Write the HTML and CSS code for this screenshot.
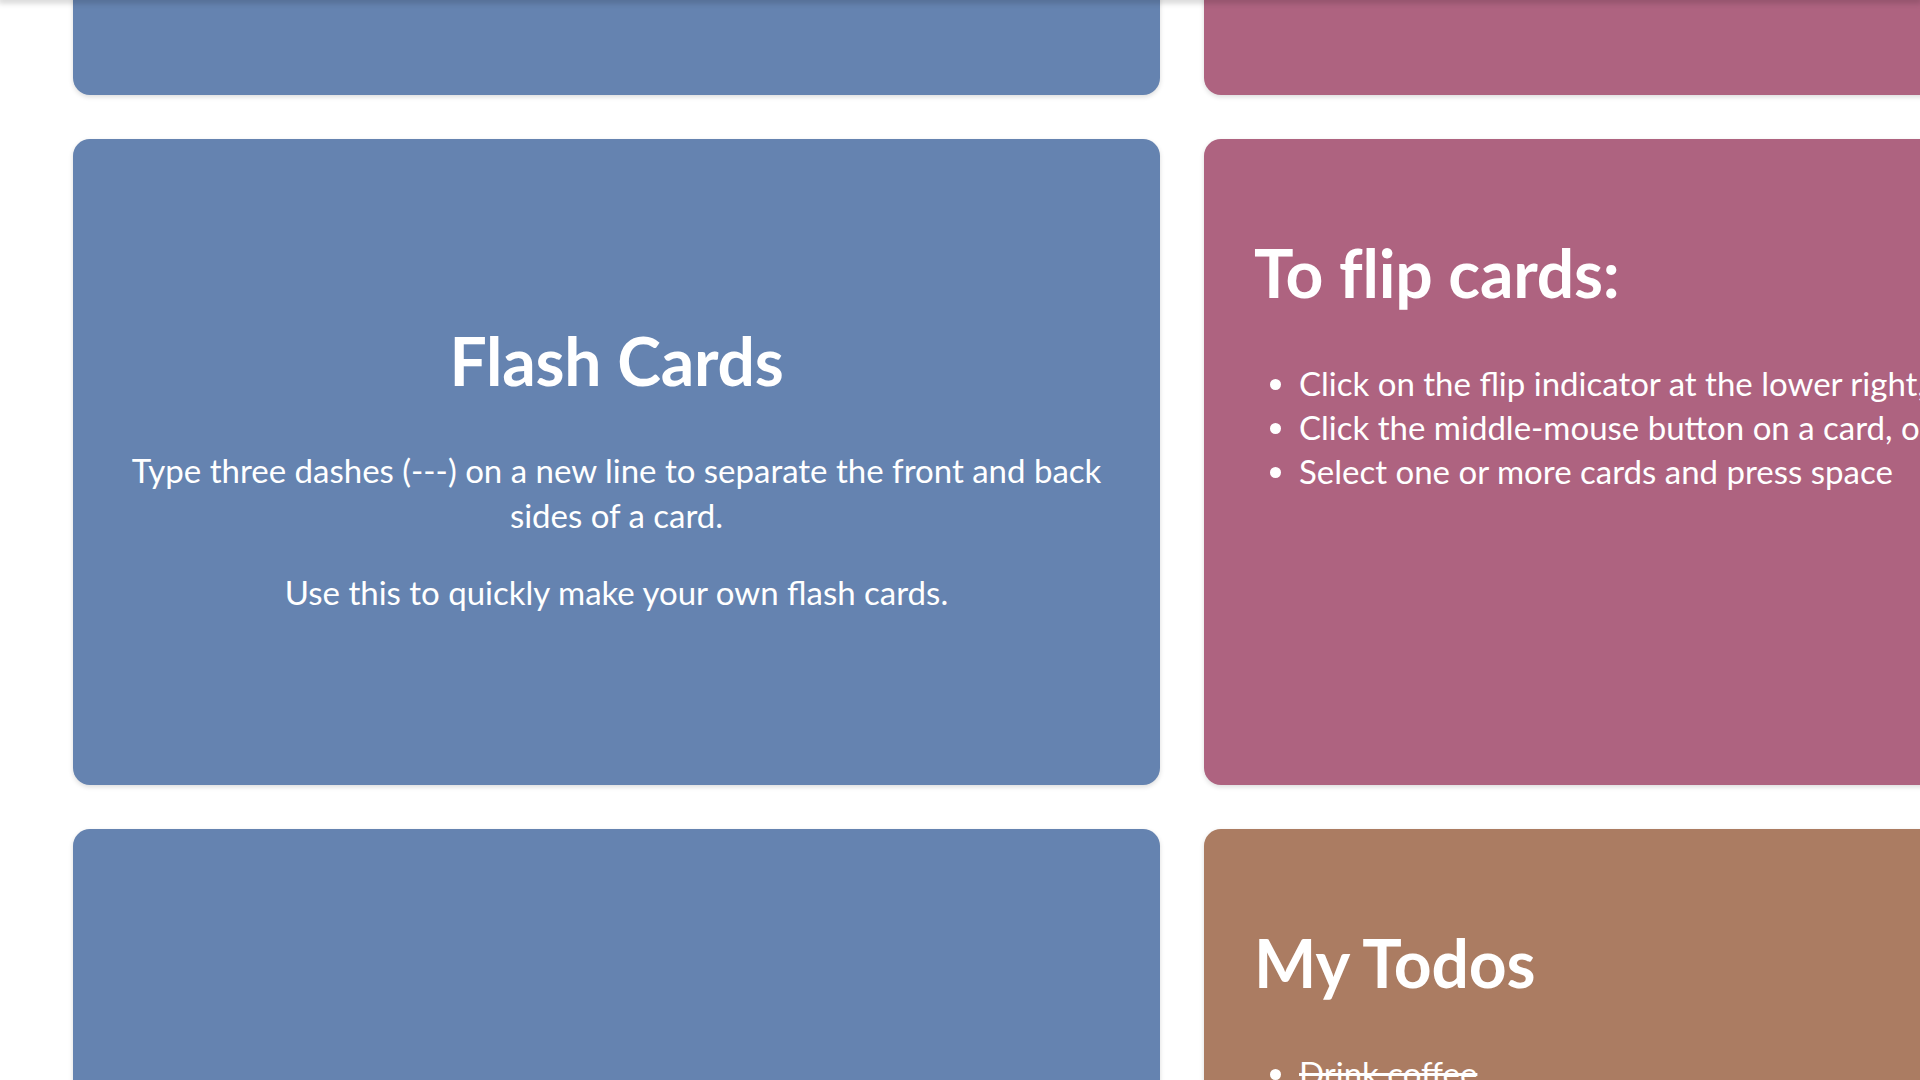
FILE: index.html
```html
<!DOCTYPE html>
<html lang="en">
<head>
<meta charset="utf-8">
<title>Canvas cards</title>
<link rel="stylesheet" href="styles.css">
</head>
<body>
<div class="topshade"></div>
<main class="canvas">
  <section class="card blue"></section>
  <section class="card pink"></section>

  <section class="card blue flash">
    <h1>Flash Cards</h1>
    <p>Type three dashes (---) on a new line to separate the front and back sides of a card.</p>
    <p>Use this to quickly make your own flash cards.</p>
  </section>
  <section class="card pink note">
    <h1>To flip cards:</h1>
    <ul>
      <li>Click on the flip indicator at the lower right, or</li>
      <li>Click the middle-mouse button on a card, or</li>
      <li>Select one or more cards and press space</li>
    </ul>
  </section>

  <section class="card blue"></section>
  <section class="card brown note">
    <h1>My Todos</h1>
    <ul>
      <li class="done">Drink coffee</li>
      <li>Write notes</li>
    </ul>
  </section>
</main>
</body>
</html>
```
FILE: styles.css
```css
html, body {
  margin: 0;
  padding: 0;
  background: #ffffff;
  overflow: hidden;
  width: 1920px;
  height: 1080px;
}

body {
  font-family: Lato, "Noto Sans", sans-serif;
  color: #ffffff;
}

.topshade {
  position: fixed;
  left: 0;
  top: 0;
  width: 100%;
  height: 0;
  box-shadow: 0 0 6px 2px rgba(0, 0, 0, 0.28);
  z-index: 5;
}

.canvas {
  display: grid;
  grid-template-columns: 1087px 1087px;
  grid-auto-rows: 646px;
  column-gap: 44px;
  row-gap: 44px;
  padding-left: 73px;
  margin-top: -551px;
}

.card {
  border-radius: 17px;
  box-shadow: 0 2px 5px rgba(0, 0, 0, 0.14);
  box-sizing: border-box;
  padding: 48px 50px;
  overflow: hidden;
}

.blue { background: #6583b0; }
.pink { background: #ae6380; }
.brown { background: #ab7c62; }

.card h1 {
  font-size: 66px;
  font-weight: 700;
  line-height: 79px;
  margin: 0;
  letter-spacing: -0.2px;
}

.flash {
  display: flex;
  flex-direction: column;
  justify-content: center;
  align-items: center;
  text-align: center;
  padding-top: 60px;
}

.flash h1 {
  margin-bottom: 48px;
}

.flash p {
  font-size: 33px;
  line-height: 45px;
  margin: 0;
}

.flash p + p {
  margin-top: 32px;
}

.note h1 {
  margin-top: 46px;
}

.note ul {
  margin: 49px 0 0;
  padding-left: 45px;
  font-size: 33px;
  line-height: 44px;
  white-space: nowrap;
}

.note li.done {
  text-decoration: line-through;
}
```
